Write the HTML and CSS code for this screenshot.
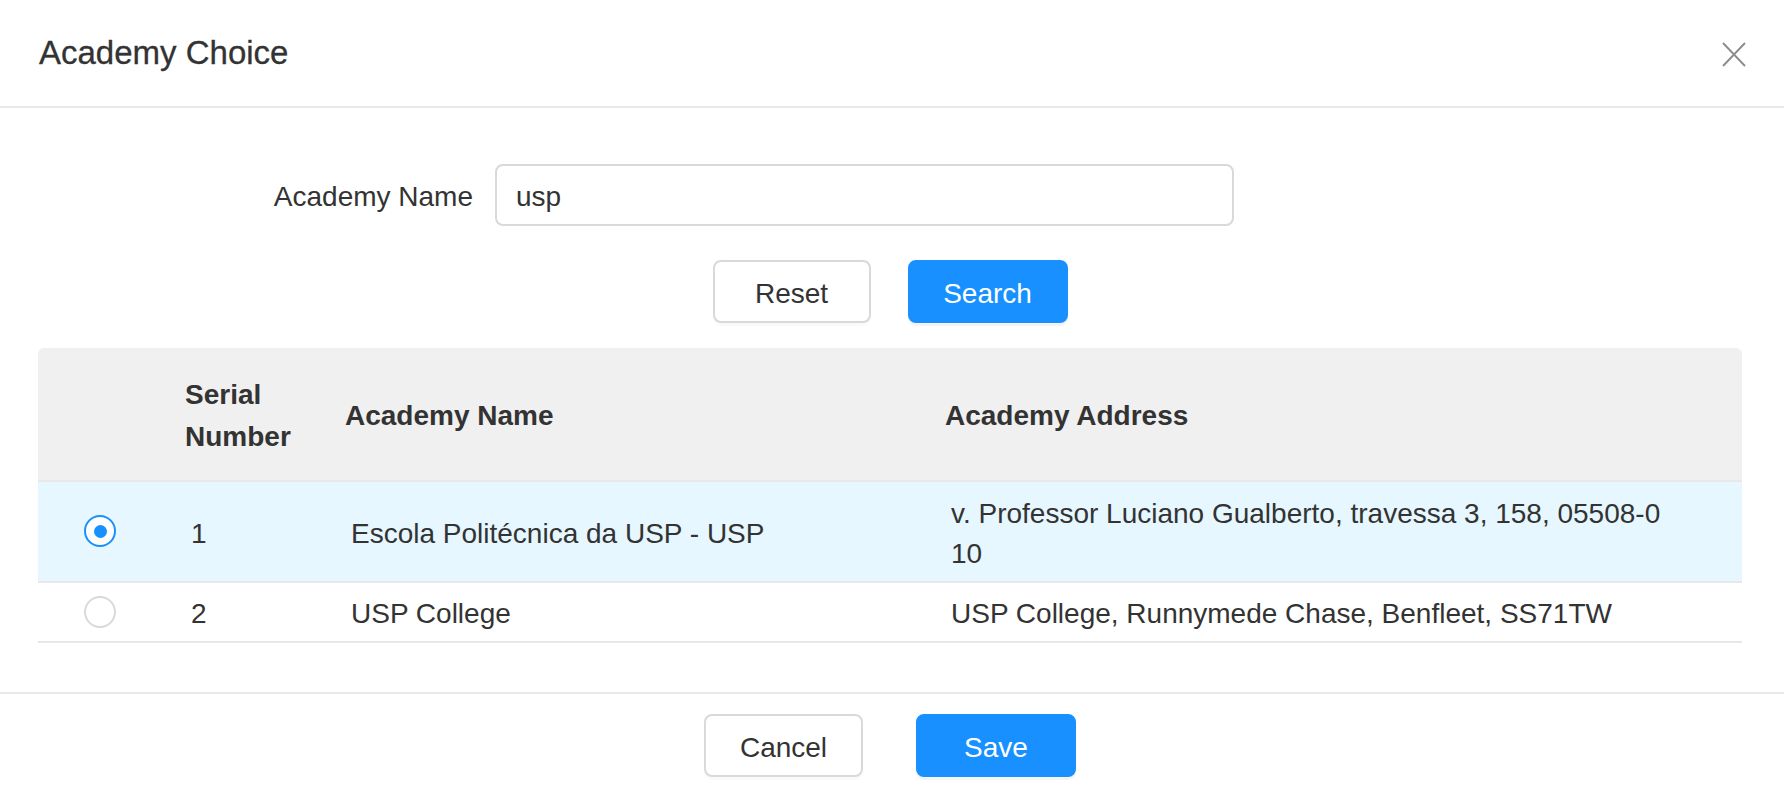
FILE: index.html
```html
<!DOCTYPE html>
<html lang="en">
<head>
<meta charset="utf-8">
<title>Academy Choice</title>
<link rel="stylesheet" href="styles.css">
</head>
<body>
<div class="modal">
  <div class="modal-header">
    <div class="modal-title">Academy Choice</div>
    <button class="close" type="button" aria-label="Close">
      <svg width="24" height="25" viewBox="0 0 24 25"><path d="M1 1 L23 24 M23 1 L1 24" stroke="#8c8c8c" stroke-width="1.9" fill="none"/></svg>
    </button>
  </div>
  <div class="modal-body">
    <form class="search-form">
      <div class="form-row">
        <label class="form-label" for="name">Academy Name</label>
        <input class="form-input" id="name" type="text" value="usp">
      </div>
      <div class="form-actions">
        <button class="btn" type="button">Reset</button>
        <button class="btn btn-primary" type="button">Search</button>
      </div>
    </form>
    <table class="table">
      <colgroup>
        <col class="col-select">
        <col class="col-serial">
        <col class="col-name">
        <col class="col-address">
      </colgroup>
      <thead>
        <tr>
          <th></th>
          <th>Serial Number</th>
          <th>Academy Name</th>
          <th>Academy Address</th>
        </tr>
      </thead>
      <tbody>
        <tr class="selected">
          <td class="cell-select"><span class="radio checked"></span></td>
          <td>1</td>
          <td>Escola Politécnica da USP - USP</td>
          <td class="cell-address">v. Professor Luciano Gualberto, travessa 3, 158, 05508-010</td>
        </tr>
        <tr>
          <td class="cell-select"><span class="radio"></span></td>
          <td>2</td>
          <td>USP College</td>
          <td class="cell-address">USP College, Runnymede Chase, Benfleet, SS71TW</td>
        </tr>
      </tbody>
    </table>
  </div>
  <div class="modal-footer">
    <button class="btn" type="button">Cancel</button>
    <button class="btn btn-primary" type="button">Save</button>
  </div>
</div>
</body>
</html>
```
FILE: styles.css
```css
html, body {
  margin: 0;
  padding: 0;
  overflow: hidden;
  background: #ffffff;
}

body {
  font-family: "Liberation Sans", Arial, sans-serif;
  font-size: 28px;
  color: #333333;
}

.modal {
  width: 1784px;
  height: 792px;
  display: flex;
  flex-direction: column;
}

.modal-header {
  height: 106px;
  flex: 0 0 auto;
  display: flex;
  align-items: center;
  justify-content: space-between;
  padding: 0 38px 0 39px;
  border-bottom: 2px solid #e8e8e8;
}

.modal-title {
  font-size: 33px;
  line-height: 44px;
  color: #333333;
  font-weight: 500;
  -webkit-text-stroke: 0.3px #333333;
}

.close {
  width: 24px;
  height: 25px;
  padding: 0;
  margin-top: 2px;
  border: 0;
  background: none;
  display: flex;
}

.modal-body {
  flex: 1 1 auto;
  padding: 56px 42px 0 38px;
}

.form-row {
  display: flex;
  align-items: center;
}

.form-label {
  width: 435px;
  text-align: right;
  margin-right: 22px;
  line-height: 40px;
  padding-top: 4px;
}

.form-input {
  box-sizing: border-box;
  width: 739px;
  height: 62px;
  border: 2px solid #d9d9d9;
  border-radius: 8px;
  padding: 4px 19px 0;
  font: inherit;
  color: #333333;
  outline: none;
}

.form-actions {
  margin-top: 34px;
  display: flex;
  justify-content: center;
  gap: 37px;
}

.btn {
  box-sizing: border-box;
  width: 158px;
  height: 63px;
  border: 2px solid #d9d9d9;
  border-radius: 8px;
  background: #ffffff;
  color: #333333;
  font: inherit;
  padding: 4px 0 0;
  box-shadow: 0 3px 0 rgba(0, 0, 0, 0.02);
}

.btn-primary {
  width: 160px;
  background: #1890ff;
  border-color: #1890ff;
  color: #ffffff;
  box-shadow: 0 3px 0 rgba(0, 0, 0, 0.045);
}

.table {
  margin-top: 25px;
  width: 100%;
  table-layout: fixed;
  border-collapse: separate;
  border-spacing: 0;
}

.col-select { width: 116px; }
.col-serial { width: 160px; }
.col-name { width: 600px; }
.col-address { width: 828px; }

.table th {
  background: #f0f0f0;
  border-bottom: 2px solid #e8e8e8;
  padding: 26px 31px 22px;
  line-height: 42px;
  text-align: left;
  font-weight: bold;
  color: #333333;
  vertical-align: middle;
}

.table th:first-child { border-top-left-radius: 6px; }
.table th:last-child { border-top-right-radius: 6px; }

.table td {
  padding: 11.5px 37px 7px;
  line-height: 40px;
  border-bottom: 2px solid #e8e8e8;
  vertical-align: middle;
}

.table tr.selected td {
  background: #e6f7ff;
}

.table td.cell-select {
  padding: 0 0 0 46px;
}

.table td.cell-address {
  padding-right: 71px;
  word-break: break-all;
}

.radio {
  box-sizing: border-box;
  width: 32px;
  height: 32px;
  border: 2px solid #d9d9d9;
  border-radius: 50%;
  background: #ffffff;
  display: flex;
  align-items: center;
  justify-content: center;
}

.radio.checked {
  border-color: #1890ff;
}

.radio.checked::after {
  content: "";
  width: 13px;
  height: 13px;
  border-radius: 50%;
  background: #1890ff;
}

.modal-footer {
  flex: 0 0 auto;
  border-top: 2px solid #e8e8e8;
  padding: 20px 42px 0 38px;
  height: 100px;
  box-sizing: border-box;
  display: flex;
  justify-content: center;
  gap: 53px;
}

.modal-footer .btn {
  width: 159px;
}

.modal-footer .btn-primary {
  width: 160px;
}
```
